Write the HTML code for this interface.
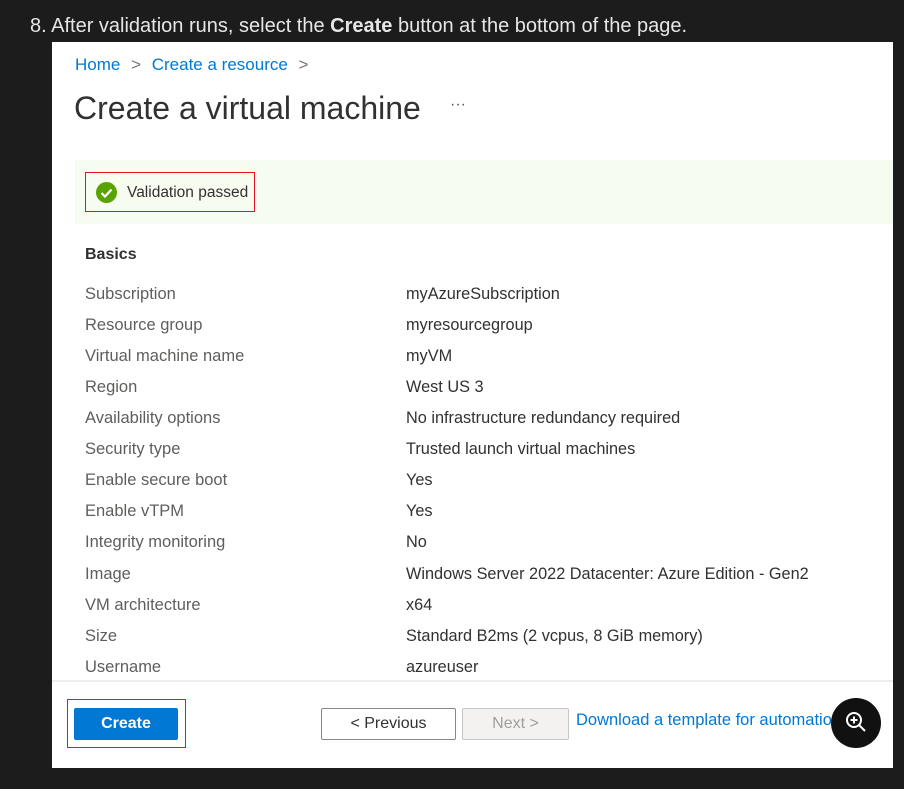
<!DOCTYPE html>
<html><head><style>
body{margin:0;width:904px;height:789px;background:#1c1c1c;position:relative;overflow:hidden;font-family:"Liberation Sans",sans-serif}
.t{position:absolute;white-space:nowrap}
.panel{position:absolute;left:52px;top:42px;width:841px;height:726px;background:#fff}
.lab{position:absolute;left:85px;font-size:16.5px;color:#605e5c;white-space:nowrap}
.val{position:absolute;left:406px;font-size:16.3px;color:#323130;white-space:nowrap}
</style></head><body>
<div class="t" style="left:30px;top:15px;font-size:20px;color:#e6e6e6">8. After validation runs, select the <b>Create</b> button at the bottom of the page.</div>
<div class="panel"></div>
<div class="t" style="left:75px;top:55px;font-size:17px;color:#0078d4">Home <span style="color:#777;margin:0 6px">&gt;</span> Create a resource <span style="color:#777;margin-left:6px">&gt;</span></div>
<div class="t" style="left:74px;top:90px;font-size:32px;color:#323130">Create a virtual machine</div>
<div class="t" style="left:450px;top:96px;font-size:16px;color:#555">···</div>
<div style="position:absolute;left:75px;top:160px;width:818px;height:64px;background:#f6fcf0"></div>
<div style="position:absolute;left:85px;top:172px;width:170px;height:40px;border:1px solid #e81123;box-sizing:border-box"></div>
<svg style="position:absolute;left:96px;top:182px" width="21" height="21"><circle cx="10.5" cy="10.5" r="10.5" fill="#57a300"/><path d="M5.5 11l3.5 3.5 6.5-7" stroke="#fff" stroke-width="2.2" fill="none"/></svg>
<div class="t" style="left:127px;top:184px;font-size:15.5px;color:#323130">Validation passed</div>
<div class="t" style="left:85px;top:246px;font-size:16px;font-weight:bold;color:#323130">Basics</div>
<div class="lab" style="top:285px">Subscription</div><div class="val" style="top:285px">myAzureSubscription</div>
<div class="lab" style="top:316px">Resource group</div><div class="val" style="top:316px">myresourcegroup</div>
<div class="lab" style="top:347px">Virtual machine name</div><div class="val" style="top:347px">myVM</div>
<div class="lab" style="top:378px">Region</div><div class="val" style="top:378px">West US 3</div>
<div class="lab" style="top:409px">Availability options</div><div class="val" style="top:409px">No infrastructure redundancy required</div>
<div class="lab" style="top:440px">Security type</div><div class="val" style="top:440px">Trusted launch virtual machines</div>
<div class="lab" style="top:471px">Enable secure boot</div><div class="val" style="top:471px">Yes</div>
<div class="lab" style="top:502px">Enable vTPM</div><div class="val" style="top:502px">Yes</div>
<div class="lab" style="top:533px">Integrity monitoring</div><div class="val" style="top:533px">No</div>
<div class="lab" style="top:565px">Image</div><div class="val" style="top:565px">Windows Server 2022 Datacenter: Azure Edition - Gen2</div>
<div class="lab" style="top:596px">VM architecture</div><div class="val" style="top:596px">x64</div>
<div class="lab" style="top:627px">Size</div><div class="val" style="top:627px">Standard B2ms (2 vcpus, 8 GiB memory)</div>
<div class="lab" style="top:658px">Username</div><div class="val" style="top:658px">azureuser</div>
<div style="position:absolute;left:52px;top:680px;width:841px;height:2px;background:#eee"></div>
<div style="position:absolute;left:67px;top:699px;width:119px;height:49px;border:1px solid #e81123;box-sizing:border-box"></div>
<div class="t" style="left:74px;top:708px;width:104px;height:32px;background:#0078d4;border-radius:2px;color:#fff;font-size:16px;font-weight:bold;text-align:center;line-height:32px">Create</div>
<div class="t" style="left:321px;top:708px;width:135px;height:32px;border:1px solid #8a8886;box-sizing:border-box;border-radius:2px;color:#323130;font-size:16px;text-align:center;line-height:30px">&lt; Previous</div>
<div class="t" style="left:462px;top:708px;width:107px;height:32px;border:1px solid #c8c6c4;background:#f3f2f1;box-sizing:border-box;border-radius:2px;color:#a19f9d;font-size:16px;text-align:center;line-height:30px">Next &gt;</div>
<div class="t" style="left:576px;top:711px;width:260px;overflow:hidden;font-size:16.5px;color:#0078d4">Download a template for automation</div>
<div style="position:absolute;left:831px;top:698px;width:50px;height:50px;border-radius:50%;background:#111"></div>
<svg style="position:absolute;left:842px;top:708px" width="28" height="28"><circle cx="12" cy="12" r="7" stroke="#fff" stroke-width="2" fill="none"/><path d="M12 8.5v7M8.5 12h7M17 17l6 6" stroke="#fff" stroke-width="2"/></svg>
</body></html>
